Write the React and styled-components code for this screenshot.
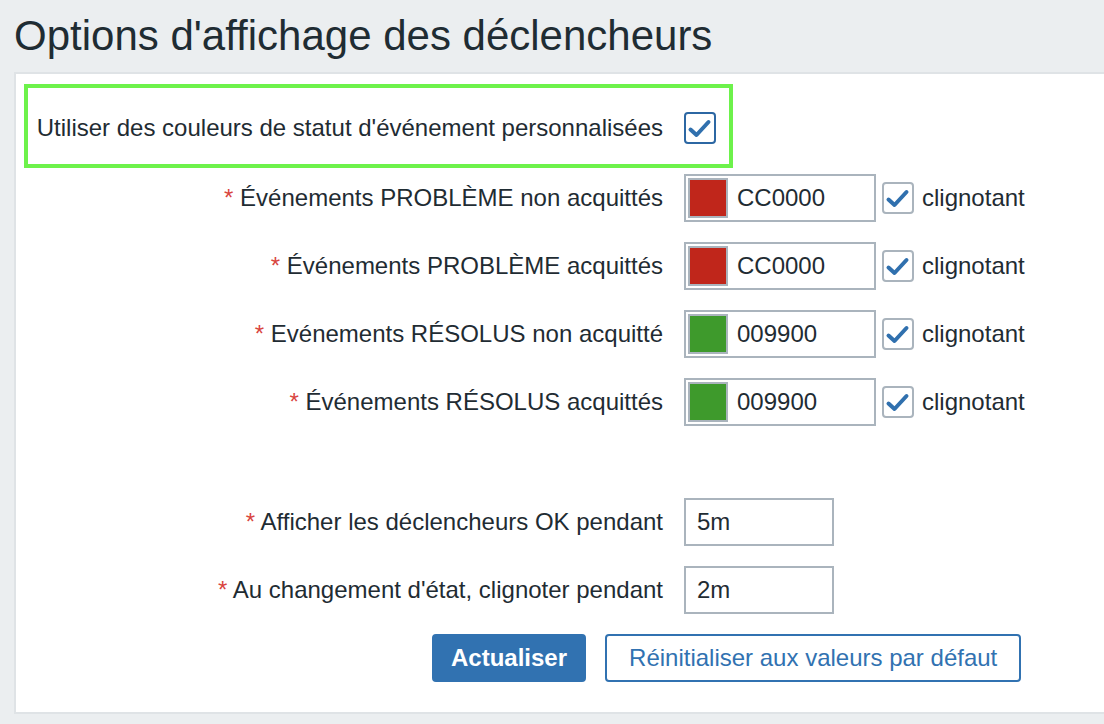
import React from "react";
import styled, { createGlobalStyle } from "styled-components";

const Global = createGlobalStyle`
  html, body { margin: 0; padding: 0; }
  body {
    background: #ebeef0;
    font-family: "Liberation Sans", Arial, sans-serif;
    color: #1f2c33;
    overflow: hidden;
    width: 1104px;
    height: 724px;
  }
`;

const Page = styled.div`
  padding-left: 14px;
`;

const Title = styled.h1`
  margin: 0;
  padding: 15px 0 15px 0;
  font-size: 42px;
  line-height: 42px;
  font-weight: normal;
  color: #1f2c33;
`;

const Panel = styled.div`
  background: #fff;
  border: 2px solid #dfe3e6;
  margin-right: -40px;
  padding: 10px 0 30px 0;
`;

const Highlight = styled.div`
  box-sizing: border-box;
  margin-left: 8px;
  width: 709px;
  height: 84px;
  border: 4px solid #6df24b;
  display: flex;
  align-items: center;
  justify-content: flex-end;
  gap: 21px;
  padding: 4px 13px 0 0;
`;

const FormGrid = styled.div`
  display: grid;
  grid-template-columns: 647px 1fr;
  column-gap: 21px;
  row-gap: 20px;
  margin-top: ${(p) => p.$top}px;
`;

const Label = styled.div`
  font-size: 24px;
  line-height: 48px;
  height: 48px;
  text-align: right;
  white-space: nowrap;
`;

const Star = styled.span`
  color: #d9453f;
`;

const Controls = styled.div`
  display: flex;
  align-items: center;
  height: 48px;
`;

const ColorField = styled.div`
  box-sizing: border-box;
  width: 192px;
  height: 48px;
  border: 2px solid #aab4bd;
  padding: 2px;
  display: flex;
  align-items: center;
  gap: 9px;
  font-size: 24px;
`;

const Swatch = styled.span`
  box-sizing: border-box;
  width: 40px;
  height: 40px;
  border: 2px solid #aab4bd;
  background: ${(p) => p.$color};
`;

const TextInput = styled.input`
  box-sizing: border-box;
  width: 150px;
  height: 48px;
  border: 2px solid #aab4bd;
  padding: 0 0 0 11px;
  margin: 0;
  font-family: "Liberation Sans", Arial, sans-serif;
  font-size: 24px;
  color: #1f2c33;
  background: #fff;
  outline: none;
`;

const Box = styled.span`
  box-sizing: border-box;
  width: 32px;
  height: 32px;
  border: 2px solid ${(p) => (p.$focused ? "#2c67a3" : "#aab4bd")};
  border-radius: 4px;
  display: inline-flex;
  align-items: center;
  justify-content: center;
  margin-left: ${(p) => p.$ml || 0}px;
  flex-shrink: 0;
`;

const BoxText = styled.span`
  font-size: 24px;
  margin-left: 8px;
`;

const HighlightText = styled.span`
  font-size: 24px;
  white-space: nowrap;
`;

const ButtonRow = styled.div`
  display: flex;
  gap: 19px;
  margin-top: 20px;
  padding-left: 416px;
`;

const Button = styled.button`
  box-sizing: border-box;
  height: 48px;
  border-radius: 4px;
  border: 2px solid #3172b1;
  background: ${(p) => (p.$primary ? "#3172b1" : "#fff")};
  color: ${(p) => (p.$primary ? "#fff" : "#3172b1")};
  font-family: "Liberation Sans", Arial, sans-serif;
  font-size: 24px;
  font-weight: ${(p) => (p.$primary ? "bold" : "normal")};
  padding: 0 ${(p) => (p.$primary ? 17 : 22)}px;
  cursor: pointer;
`;

function Check({ focused, ml }) {
  return (
    <Box $focused={focused} $ml={ml}>
      <svg width="28" height="28" viewBox="0 0 28 28">
        <polyline
          points="4.5,15.5 10.5,21 22.5,8"
          fill="none"
          stroke="#3070ae"
          strokeWidth="4"
          strokeLinecap="round"
          strokeLinejoin="round"
        />
      </svg>
    </Box>
  );
}

const colorRows = [
  { label: "Événements PROBLÈME non acquittés", color: "#c0261b", value: "CC0000" },
  { label: "Événements PROBLÈME acquittés", color: "#c0261b", value: "CC0000" },
  { label: "Evénements RÉSOLUS non acquitté", color: "#3e9a2c", value: "009900" },
  { label: "Événements RÉSOLUS acquittés", color: "#3e9a2c", value: "009900" },
];

const timeRows = [
  { label: "Afficher les déclencheurs OK pendant", value: "5m" },
  { label: "Au changement d'état, clignoter pendant", value: "2m" },
];

export default function App() {
  return (
    <Page>
      <Global />
      <Title>Options d'affichage des déclencheurs</Title>
      <Panel>
        <Highlight>
          <HighlightText>Utiliser des couleurs de statut d'événement personnalisées</HighlightText>
          <Check focused />
        </Highlight>
        <FormGrid $top={6}>
          {colorRows.map((r) => (
            <React.Fragment key={r.label}>
              <Label>
                <Star>*</Star> {r.label}
              </Label>
              <Controls>
                <ColorField>
                  <Swatch $color={r.color} />
                  {r.value}
                </ColorField>
                <Check ml={6} />
                <BoxText>clignotant</BoxText>
              </Controls>
            </React.Fragment>
          ))}
        </FormGrid>
        <FormGrid $top={72}>
          {timeRows.map((r) => (
            <React.Fragment key={r.label}>
              <Label>
                <Star>*</Star> {r.label}
              </Label>
              <Controls>
                <TextInput readOnly value={r.value} />
              </Controls>
            </React.Fragment>
          ))}
        </FormGrid>
        <ButtonRow>
          <Button $primary>Actualiser</Button>
          <Button>Réinitialiser aux valeurs par défaut</Button>
        </ButtonRow>
      </Panel>
    </Page>
  );
}
